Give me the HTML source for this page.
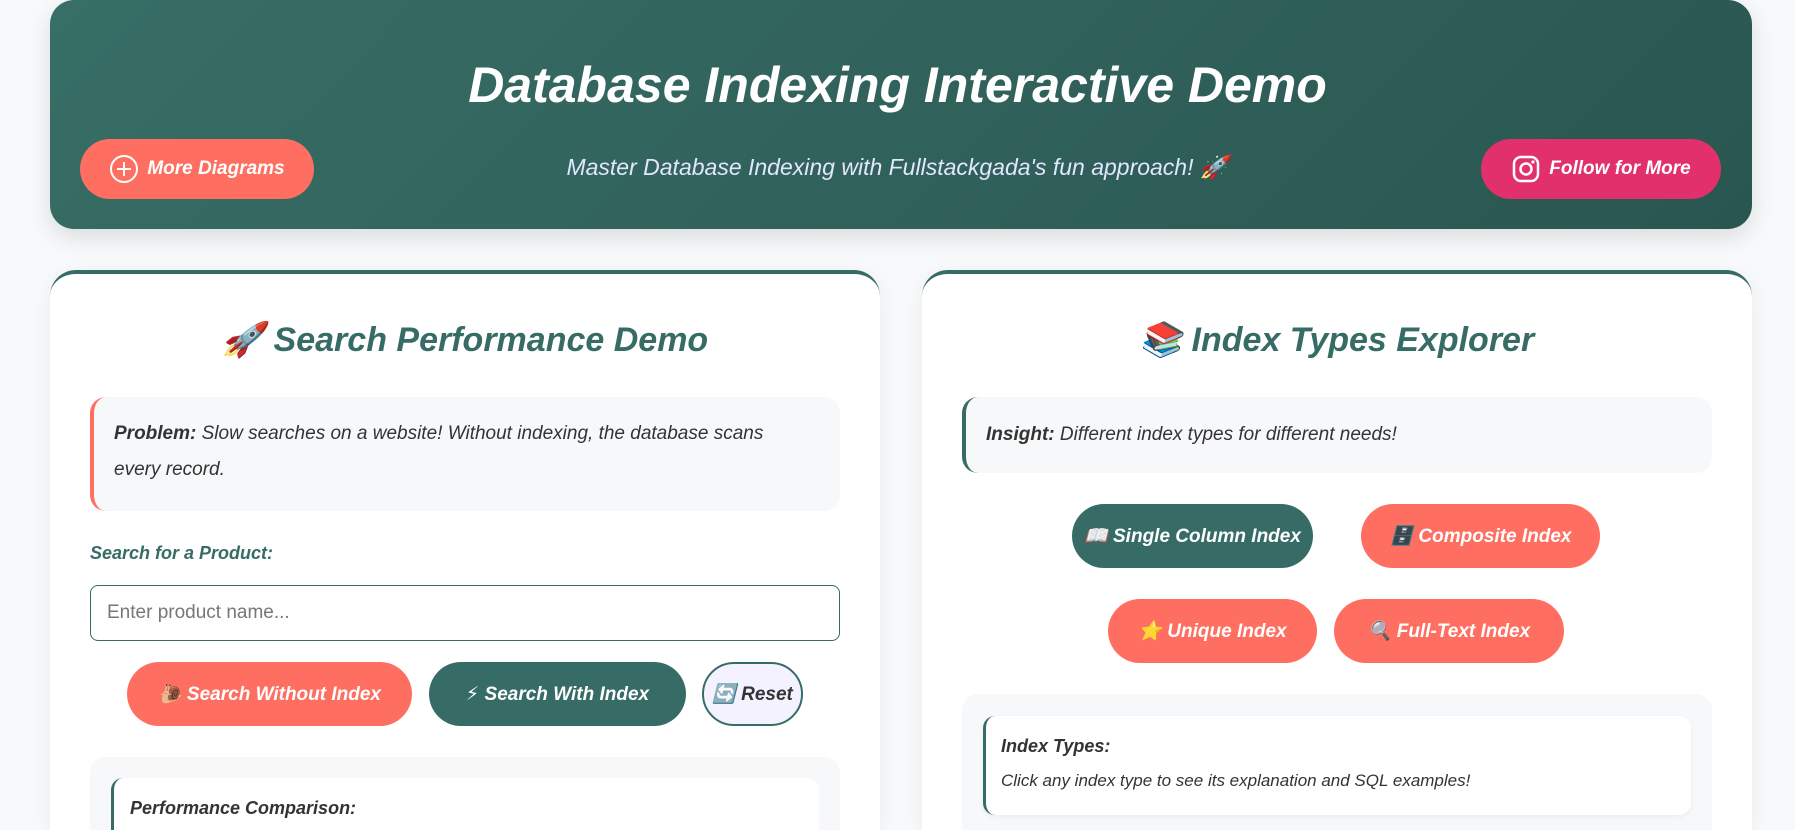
<!DOCTYPE html>
<html><head><meta charset="utf-8"><style>
*{box-sizing:border-box;margin:0;padding:0}
html,body{width:1795px;height:830px;overflow:hidden}
body{background:#f7f9fb;font-family:"Liberation Sans","DejaVu Sans",sans-serif;color:#333}
#wrap{position:relative;width:1795px;height:830px;overflow:hidden}
.abs{position:absolute}
.header{left:50px;top:0;width:1702px;height:229px;border-radius:24px;background:linear-gradient(135deg,#376e66,#2a5650);box-shadow:0 8px 24px rgba(0,0,0,.12)}
.title{left:0;width:1795px;top:56px;text-align:center;color:#fff;font-size:50px;font-weight:bold;font-style:italic}
.sub{left:0;width:1795px;top:154px;text-align:center;color:#e2e6ff;font-size:23px;font-style:italic}
.pill{border-radius:32px;color:#fff;font-weight:bold;font-style:italic;font-size:19px;display:flex;align-items:center;justify-content:center;gap:8px}
.coral{background:#ff6f61}.teal{background:#376c66}
.card{background:#fff;border-top:4px solid #376c66;border-radius:26px 26px 0 0;height:560px;box-shadow:0 4px 20px rgba(0,0,0,.06)}
.ct{color:#376c66;font-size:34px;font-weight:bold;font-style:italic;text-align:center}
.box{background:#f7f8fa;border-radius:16px}
.txt{font-size:19px;font-style:italic;color:#333;line-height:36px}
</style></head><body><div id="wrap">
<div class="abs header"></div>
<div class="abs title">Database Indexing Interactive Demo</div>
<div class="abs sub">Master Database Indexing with Fullstackgada's fun approach! 🚀</div>
<div class="abs pill coral" style="left:80px;top:139px;width:234px;height:60px"><svg width="30" height="30" viewBox="0 0 30 30"><circle cx="15" cy="15" r="13" fill="none" stroke="#fff" stroke-width="2"/><path d="M15 8v14M8 15h14" stroke="#fff" stroke-width="2"/></svg>More Diagrams</div>
<div class="abs pill" style="left:1481px;top:139px;width:240px;height:60px;background:#e1306c"><svg width="30" height="30" viewBox="0 0 30 30"><rect x="3" y="3" width="24" height="24" rx="7" fill="none" stroke="#fff" stroke-width="2.5"/><circle cx="15" cy="15" r="5.5" fill="none" stroke="#fff" stroke-width="2.5"/><circle cx="22" cy="8" r="1.6" fill="#fff"/></svg>Follow for More</div>

<div class="abs card" style="left:50px;top:270px;width:830px"></div>
<div class="abs card" style="left:922px;top:270px;width:830px"></div>

<div class="abs ct" style="left:50px;width:830px;top:320px">🚀 Search Performance Demo</div>
<div class="abs box" style="left:90px;top:397px;width:750px;height:114px;border-left:4px solid #ff6f61"></div>
<div class="abs txt" style="left:114px;top:416px;width:700px"><b>Problem:</b> Slow searches on a website! Without indexing, the database scans every record.</div>
<div class="abs" style="left:90px;top:543px;color:#376c66;font-size:18px;font-weight:bold;font-style:italic">Search for a Product:</div>
<div class="abs" style="left:90px;top:585px;width:750px;height:56px;border:1.5px solid #376c66;border-radius:8px;padding:0 16px;line-height:53px;color:#777;font-size:19px">Enter product name...</div>
<div class="abs pill coral" style="left:127px;top:662px;width:285px;height:64px">🐌 Search Without Index</div>
<div class="abs pill teal" style="left:429px;top:662px;width:257px;height:64px">⚡ Search With Index</div>
<div class="abs pill" style="left:702px;top:662px;width:101px;height:64px;background:#f4f2ff;border:2px solid #376c66;color:#333">🔄 Reset</div>
<div class="abs box" style="left:90px;top:757px;width:750px;height:73px;border-radius:16px 16px 0 0"></div>
<div class="abs" style="left:111px;top:778px;width:708px;height:52px;background:#fff;border-left:3px solid #376c66;border-radius:12px 12px 0 0"></div>
<div class="abs" style="left:130px;top:798px;font-size:18px;font-weight:bold;font-style:italic">Performance Comparison:</div>

<div class="abs ct" style="left:922px;width:830px;top:320px">📚 Index Types Explorer</div>
<div class="abs box" style="left:962px;top:397px;width:750px;height:76px;border-left:4px solid #376c66"></div>
<div class="abs txt" style="left:986px;top:417px"><b>Insight:</b> Different index types for different needs!</div>
<div class="abs pill teal" style="left:1072px;top:504px;width:241px;height:64px">📖 Single Column Index</div>
<div class="abs pill coral" style="left:1361px;top:504px;width:239px;height:64px">🗄️ Composite Index</div>
<div class="abs pill coral" style="left:1108px;top:599px;width:209px;height:64px">⭐ Unique Index</div>
<div class="abs pill coral" style="left:1334px;top:599px;width:230px;height:64px">🔍 Full-Text Index</div>
<div class="abs box" style="left:962px;top:694px;width:750px;height:136px;border-radius:16px 16px 0 0"></div>
<div class="abs" style="left:983px;top:716px;width:708px;height:99px;background:#fff;border-left:3px solid #376c66;border-radius:12px;box-shadow:0 2px 6px rgba(0,0,0,.05)"></div>
<div class="abs" style="left:1001px;top:736px;font-size:18px;font-weight:bold;font-style:italic">Index Types:</div>
<div class="abs" style="left:1001px;top:771px;font-size:17px;font-style:italic">Click any index type to see its explanation and SQL examples!</div>
</div></body></html>
